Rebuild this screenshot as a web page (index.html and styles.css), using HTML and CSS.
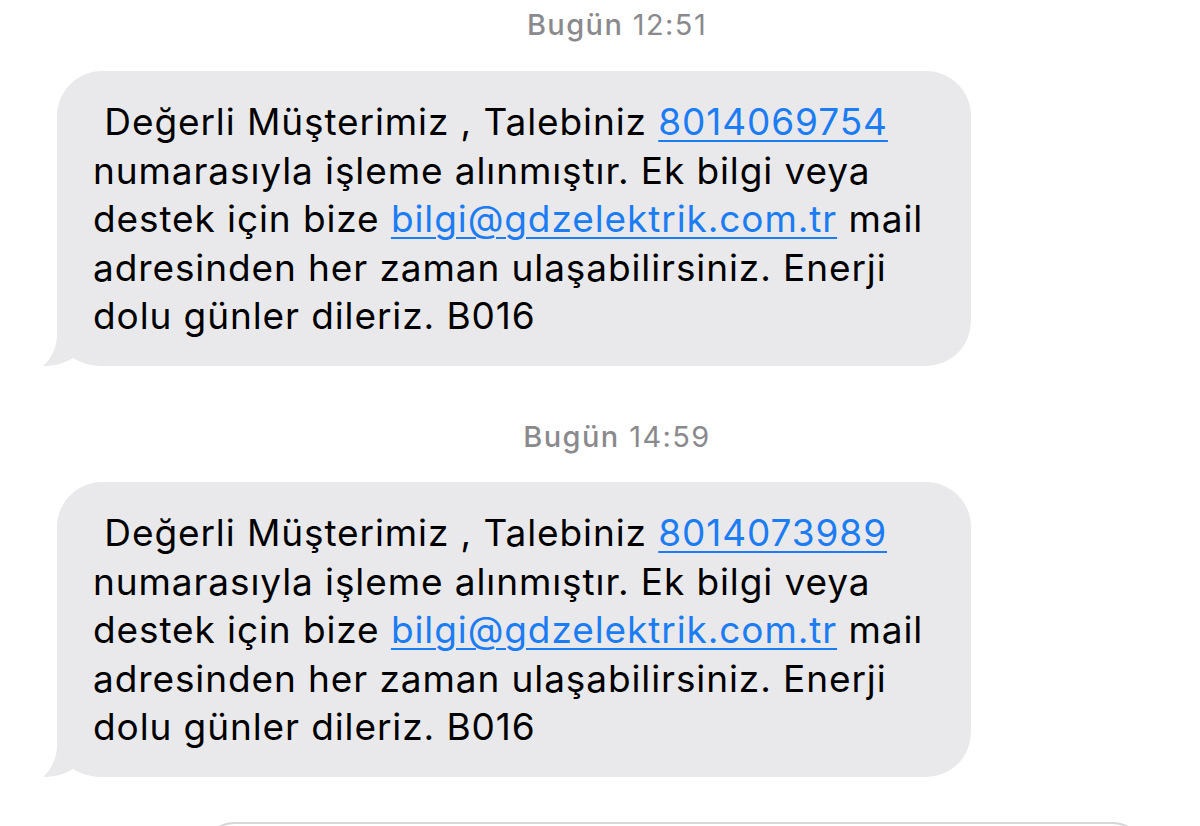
FILE: index.html
```html
<!DOCTYPE html>
<html lang="tr">
<head>
  <meta charset="UTF-8">
  <title>Mesajlar</title>
  <link rel="stylesheet" href="styles.css">
</head>
<body>
  <div class="thread">
    <div class="stamp"><b>Bugün</b> 12:51</div>

    <div class="bubble">
      <p class="text">&nbsp;Değerli Müşterimiz , Talebiniz <a href="#">8014069754</a><br>numarasıyla işleme alınmıştır. Ek bilgi veya<br>destek için bize <a href="#">bilgi@gdzelektrik.com.tr</a> mail<br>adresinden her zaman ulaşabilirsiniz. Enerji<br>dolu günler dileriz. B016</p>
      <svg class="tail" width="70" height="50" viewBox="0 0 70 50">
        <path d="M14 0 L14 18 C14 32 8 43 0 50 C12 50 22 47 30 42 C38 47 48 50 60 50 L70 50 L70 0 Z" fill="#e9e9eb"/>
      </svg>
    </div>

    <div class="stamp"><b>Bugün</b> 14:59</div>

    <div class="bubble">
      <p class="text">&nbsp;Değerli Müşterimiz , Talebiniz <a href="#">8014073989</a><br>numarasıyla işleme alınmıştır. Ek bilgi veya<br>destek için bize <a href="#">bilgi@gdzelektrik.com.tr</a> mail<br>adresinden her zaman ulaşabilirsiniz. Enerji<br>dolu günler dileriz. B016</p>
      <svg class="tail" width="70" height="50" viewBox="0 0 70 50">
        <path d="M14 0 L14 18 C14 32 8 43 0 50 C12 50 22 47 30 42 C38 47 48 50 60 50 L70 50 L70 0 Z" fill="#e9e9eb"/>
      </svg>
    </div>

    <div class="compose"></div>
  </div>
</body>
</html>
```

FILE: styles.css
```css
body {
  margin: 0;
  background: #fff;
  font-family: Inter, "Liberation Sans", sans-serif;
  overflow: hidden;
}
.thread {
  display: flex;
  flex-direction: column;
  height: 826px;
  overflow: hidden;
}
.stamp {
  margin: 54px 0 28px;
  padding-left: 34px;
  text-align: center;
  font-size: 29px;
  line-height: 34px;
  letter-spacing: 1.4px;
  color: #8a8a8e;
}
.stamp:first-child {
  margin-top: 8px;
  margin-bottom: 29px;
}
.stamp b {
  font-weight: 500;
}
.bubble {
  position: relative;
  width: 914px;
  margin-left: 57px;
  flex-shrink: 0;
  box-sizing: border-box;
  padding: 27px 20px 25px 36px;
  background: #e9e9eb;
  border-radius: 45px;
}
.text {
  position: relative;
  z-index: 1;
  margin: 0;
  font-size: 37px;
  line-height: 48.6px;
  letter-spacing: 0.9px;
  color: #000;
}
.text a {
  color: #1b7cf4;
  text-decoration: underline;
  text-decoration-thickness: 2px;
  text-underline-offset: 5px;
}
.tail {
  position: absolute;
  left: -14px;
  bottom: 0;
}
.compose {
  margin: 45px 0 0 200px;
  width: 947px;
  height: 70px;
  flex-shrink: 0;
  box-sizing: border-box;
  border: 2px solid #d6d6d8;
  border-radius: 36px;
}
```
